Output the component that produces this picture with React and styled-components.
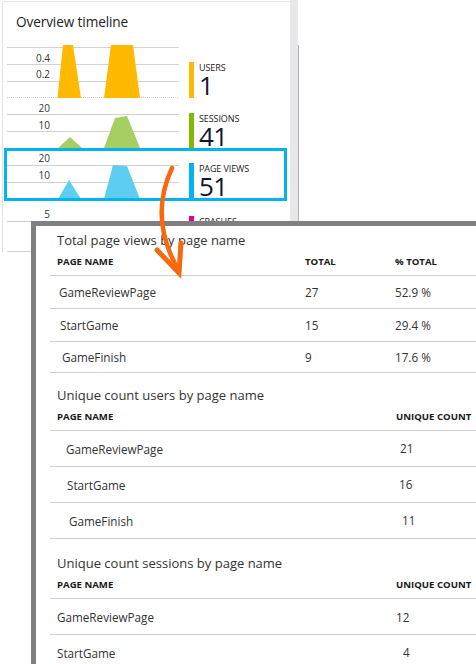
import React from 'react';
import styled, { createGlobalStyle } from 'styled-components';

const GlobalStyle = createGlobalStyle`
    html, body {
        margin: 0;
        padding: 0;
        background: #fff;
        overflow: hidden;
    }
    body {
        font-family: 'Open Sans', 'Noto Sans', sans-serif;
        color: #333;
    }
`;

// y values are local to each chart row
const charts = [
    {
        key: 'users',
        label: 'USERS',
        value: '1',
        height: 56,
        fill: '#ffb900',
        bar: '#ffb900',
        legendTop: 20,
        grid: [5, 22, 39],
        base: 55.5,
        ticks: [{ y: 16, text: '0.4' }, { y: 32, text: '0.2' }],
        shapes: ['M50.5,56 L56,3 L66,3 L74,56 Z', 'M97,56 L104,3 L126,3 L133,56 Z'],
    },
    {
        key: 'sessions',
        label: 'SESSIONS',
        value: '41',
        height: 50,
        fill: '#a6ce63',
        bar: '#7fba00',
        legendTop: 15,
        grid: [16, 33],
        ticks: [{ y: 10, text: '20' }, { y: 27, text: '10' }],
        shapes: ['M51,50 L63,39 L75,50 Z', 'M97,50 L108,20 L120,18 L133,50 Z'],
    },
    {
        key: 'pageviews',
        label: 'PAGE VIEWS',
        value: '51',
        height: 47,
        fill: '#5ecdf2',
        bar: '#00b4f0',
        legendTop: 12,
        selected: true,
        grid: [14, 31],
        ticks: [{ y: 7, text: '20' }, { y: 24, text: '10' }],
        shapes: ['M51,48 L62,29 L74,48 Z', 'M97,48 L106,14 L120,15 L133,48 Z'],
    },
    {
        key: 'crashes',
        label: 'CRASHES',
        value: '',
        height: 51,
        fill: '#e3008c',
        bar: '#e3008c',
        legendTop: 15,
        grid: [20, 50],
        ticks: [{ y: 13, text: '5' }],
        shapes: [],
    },
];

const tables = [
    {
        title: 'Total page views by page name',
        columns: '248px 90px 1fr',
        headers: ['PAGE NAME', 'TOTAL', '% TOTAL'],
        rowHeight: 33,
        gapTop: 0,
        rows: [
            { indent: 2, cells: ['GameReviewPage', '27', '52.9 %'] },
            { indent: 3, cells: ['StartGame', '15', '29.4 %'] },
            { indent: 5, cells: ['GameFinish', '9', '17.6 %'], height: 31 },
        ],
    },
    {
        title: 'Unique count users by page name',
        columns: '339px 1fr',
        headers: ['PAGE NAME', 'UNIQUE COUNT'],
        rowHeight: 36,
        gapTop: 8,
        rows: [
            { indent: 9, cells: ['GameReviewPage', '21'], shift: 4 },
            { indent: 10, cells: ['StartGame', '16'], shift: 3 },
            { indent: 12, cells: ['GameFinish', '11'], shift: 6 },
        ],
    },
    {
        title: 'Unique count sessions by page name',
        columns: '339px 1fr',
        headers: ['PAGE NAME', 'UNIQUE COUNT'],
        rowHeight: 36,
        gapTop: 10,
        rows: [
            { indent: 0, cells: ['GameReviewPage', '12'], shift: 0 },
            { indent: 0, cells: ['StartGame', '4'], shift: 7 },
        ],
    },
];

function ChartRow({ chart }) {
    const { label, value, fill, bar, ticks, grid, base, shapes, selected, height, legendTop } = chart;
    return (
        <ChartLine $selected={selected} $height={height}>
            <Plot>
                <svg width='172' height={height} viewBox={`0 0 172 ${height}`}>
                    {grid.map((y) => (
                        <line key={y} x1='0' x2='172' y1={y + 0.5} y2={y + 0.5} stroke='#d2d2d2' />
                    ))}
                    {base && <line x1='0' x2='172' y1={base} y2={base} stroke='#c8c8c8' strokeDasharray='1 1' />}
                    {shapes.map((d) => (
                        <path key={d} d={d} fill={fill} />
                    ))}
                </svg>
                {ticks.map((t) => (
                    <TickLabel key={t.text} style={{ top: t.y - 6 }}>
                        {t.text}
                    </TickLabel>
                ))}
            </Plot>
            <Legend $color={bar} $top={legendTop}>
                <div className='name'>{label}</div>
                <div className='value'>{value}</div>
            </Legend>
        </ChartLine>
    );
}

function DataTable({ table }) {
    const { title, columns, headers, rows, rowHeight, gapTop } = table;
    return (
        <TableBlock $gap={gapTop}>
            <TableTitle>{title}</TableTitle>
            <HeaderRow $columns={columns}>
                {headers.map((h) => (
                    <div key={h}>{h}</div>
                ))}
            </HeaderRow>
            {rows.map((row) => (
                <BodyRow key={row.cells[0]} $columns={columns} $height={row.height || rowHeight}>
                    <Cell $indent={row.indent}>{row.cells[0]}</Cell>
                    {row.cells.slice(1).map((c, i) => (
                        <Cell key={i} $indent={i === 0 ? row.shift || 0 : 0} $raise={i === 0 && row.shift ? 1 : 0}>
                            {c}
                        </Cell>
                    ))}
                </BodyRow>
            ))}
        </TableBlock>
    );
}

function App() {
    return (
        <Stage>
            <GlobalStyle />
            <BladeArea>
                <Blade>
                    <BladeTitle>Overview timeline</BladeTitle>
                    <Charts>
                        {charts.map((c) => (
                            <ChartRow key={c.key} chart={c} />
                        ))}
                    </Charts>
                </Blade>
                <Gutter />
                <Divider />
            </BladeArea>

            <DetailCard>
                {tables.map((t) => (
                    <DataTable key={t.title} table={t} />
                ))}
            </DetailCard>

            <Arrow width='476' height='664' viewBox='0 0 476 664'>
                <path d='M172,168 C158,198 156,232 179,271' fill='none' stroke='#f7690c' strokeWidth='4.5' strokeLinecap='round' />
                <path d='M157,250 L179,273 L181,243' fill='none' stroke='#f7690c' strokeWidth='5' strokeLinecap='round' />
            </Arrow>
        </Stage>
    );
}

const Stage = styled.div`
    position: relative;
    width: 476px;
    height: 664px;
    overflow: hidden;
    background: #fff;
`;

const BladeArea = styled.div`
    display: flex;
    align-items: stretch;
    height: 252px;
`;

const Blade = styled.div`
    width: 287px;
    margin-left: 2px;
    margin-top: 1px;
    border-left: 1px solid #e2e2e2;
    border-top: 1px solid #e6e6e6;
    background: #fff;
    overflow: hidden;
`;

const Gutter = styled.div`
    width: 8px;
    background: #e8e8ea;
`;

const Divider = styled.div`
    width: 1px;
    margin-top: 45px;
    background: #b4b4b4;
`;

const BladeTitle = styled.div`
    padding: 10px 0 0 13px;
    height: 31px;
    box-sizing: border-box;
    font-size: 13.6px;
    color: #222;
    letter-spacing: -0.1px;
`;

const Charts = styled.div`
    display: flex;
    flex-direction: column;
    margin-top: 9px;
`;

const ChartLine = styled.div`
    display: flex;
    margin-left: 1px;
    width: 277px;
    height: ${(p) => p.$height}px;
    border: 3px solid ${(p) => (p.$selected ? '#00b4f0' : 'transparent')};
    border-top-width: ${(p) => (p.$selected ? '3px' : '0')};
    border-bottom-width: ${(p) => (p.$selected ? '3px' : '0')};
    box-sizing: content-box;
`;

const Plot = styled.div`
    position: relative;
    width: 172px;
    flex: none;

    svg {
        display: block;
    }
`;

const TickLabel = styled.div`
    position: absolute;
    right: 129px;
    font-size: 10px;
    line-height: 12px;
    color: #333;
`;

const Legend = styled.div`
    margin-left: 10px;
    margin-top: ${(p) => p.$top}px;
    height: 36px;
    border-left: 5px solid ${(p) => p.$color};
    padding-left: 5px;
    display: flex;
    flex-direction: column;
    align-self: flex-start;

    .name {
        font-size: 9px;
        line-height: 12px;
        color: #222;
        letter-spacing: -0.1px;
    }

    .value {
        font-size: 26px;
        line-height: 22px;
        color: #141432;
        letter-spacing: -0.5px;
    }
`;

const DetailCard = styled.div`
    position: absolute;
    left: 31px;
    top: 221px;
    width: 470px;
    height: 480px;
    background: #fff;
    border-left: 5px solid #808080;
    border-top: 5px solid #808080;
    padding: 0 0 0 14px;
    box-sizing: border-box;
    display: flex;
    flex-direction: column;
`;

const TableBlock = styled.div`
    display: flex;
    flex-direction: column;
    padding-top: ${(p) => p.$gap}px;
`;

const TableTitle = styled.div`
    padding-left: 7px;
    height: 23px;
    display: flex;
    align-items: center;
    padding-top: 5px;
    box-sizing: border-box;
    font-size: 13px;
    line-height: 18px;
    color: #333;
`;

const HeaderRow = styled.div`
    display: grid;
    grid-template-columns: ${(p) => p.$columns};
    height: 14px;
    padding: 6px 0 6px 7px;
    border-bottom: 1px solid #d0d0d0;
    font-size: 9.6px;
    font-weight: 700;
    line-height: 14px;
    color: #1a1a1a;
`;

const BodyRow = styled.div`
    display: grid;
    grid-template-columns: ${(p) => p.$columns};
    height: ${(p) => p.$height - 1}px;
    align-items: center;
    padding-left: 7px;
    border-bottom: 1px solid #d0d0d0;
    font-size: 11.7px;
    color: #333;
`;

const Cell = styled.div`
    padding-left: ${(p) => p.$indent}px;
    position: relative;
    top: ${(p) => (p.$raise ? '-1px' : '0')};
`;

const Arrow = styled.svg`
    position: absolute;
    left: 0;
    top: 0;
    pointer-events: none;
`;

export default App;
